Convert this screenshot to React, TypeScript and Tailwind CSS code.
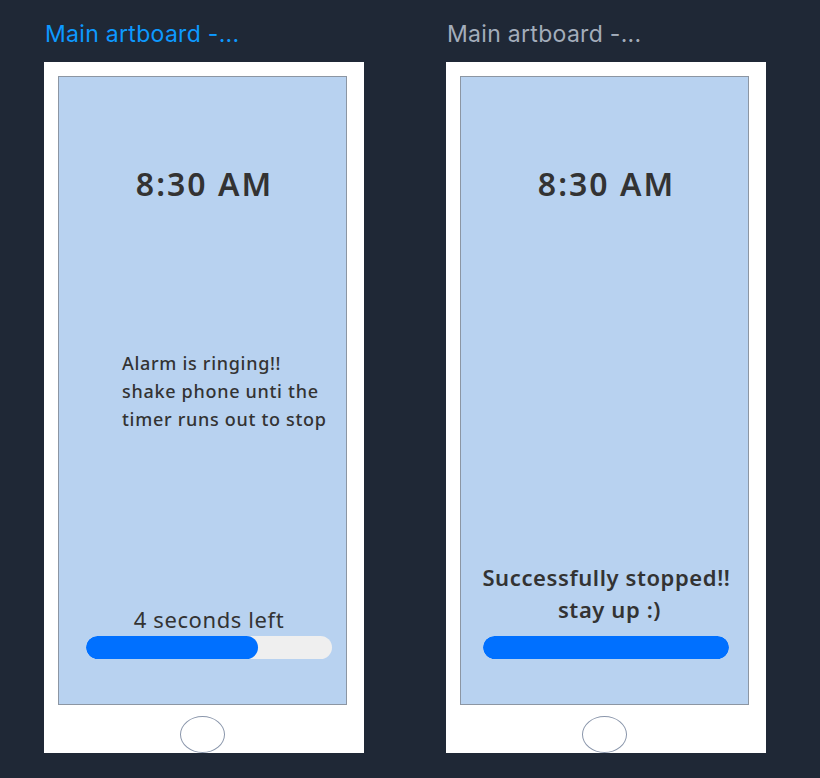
import React from "react";

const sans = '"Noto Sans", "Open Sans", Arial, sans-serif';
const ui = 'Inter, "Noto Sans", sans-serif';

function Progress({ pct }: { pct: number }) {
  return (
    <div className="h-[23px] w-[246px] rounded-full bg-[#efefef] overflow-hidden">
      <div className="h-full rounded-full bg-[#0070ff]" style={{ width: `${pct}%` }} />
    </div>
  );
}

function Phone({ children }: { children: React.ReactNode }) {
  return (
    <div className="flex h-[691px] w-[320px] flex-col bg-white pl-[14px] pt-[14px]">
      <div className="relative flex h-[629px] w-[289px] flex-col items-center border border-[#8c96a3] bg-[#b8d2f0] text-[#333333]">
        {children}
      </div>
      <div className="flex w-[289px] justify-center pt-[11px]">
        <div className="h-[37px] w-[45px] rounded-[50%] border border-[#8a96ab]" />
      </div>
    </div>
  );
}

function Title({ active }: { active?: boolean }) {
  return (
    <div
      className={
        "h-[43px] pl-[1px] text-[23px] leading-[30px] tracking-[0.3px] " +
        (active ? "text-[#0d99ff]" : "text-[#a3adbb]")
      }
      style={{ fontFamily: ui }}
    >
      Main artboard -...
    </div>
  );
}

export default function App() {
  return (
    <div className="min-h-[778px] w-[820px] bg-[#1f2836]" style={{ fontFamily: sans }}>
      <div className="flex gap-[82px] pl-[44px] pt-[19px]">
        <div className="flex flex-col">
          <Title active />
          <Phone>
            <div className="mt-[87px] pl-[4px] text-[32px] font-semibold leading-[40px] tracking-[2px]">8:30 AM</div>
            <div className="mt-[145px] w-full pl-[63px] text-[18px] font-medium leading-[28px] tracking-[0.7px]">
              <div>Alarm is ringing!!</div>
              <div>shake phone unti the</div>
              <div>timer runs out to stop</div>
            </div>
            <div className="mt-[172px] pl-[13px] text-[22px] leading-[28px] tracking-[0.6px]">4 seconds left</div>
            <div className="mt-[3px] self-start pl-[27px]">
              <Progress pct={70} />
            </div>
          </Phone>
        </div>
        <div className="flex flex-col">
          <Title />
          <Phone>
            <div className="mt-[87px] pl-[4px] text-[32px] font-semibold leading-[40px] tracking-[2px]">8:30 AM</div>
            <div className="mt-[357px] pl-[4px] text-center text-[22px] font-semibold leading-[32px] tracking-[0.6px]">
              <div>Successfully stopped!!</div>
              <div className="pl-[6px]">stay up :)</div>
            </div>
            <div className="mt-[11px] self-start pl-[22px]">
              <Progress pct={100} />
            </div>
          </Phone>
        </div>
      </div>
    </div>
  );
}
